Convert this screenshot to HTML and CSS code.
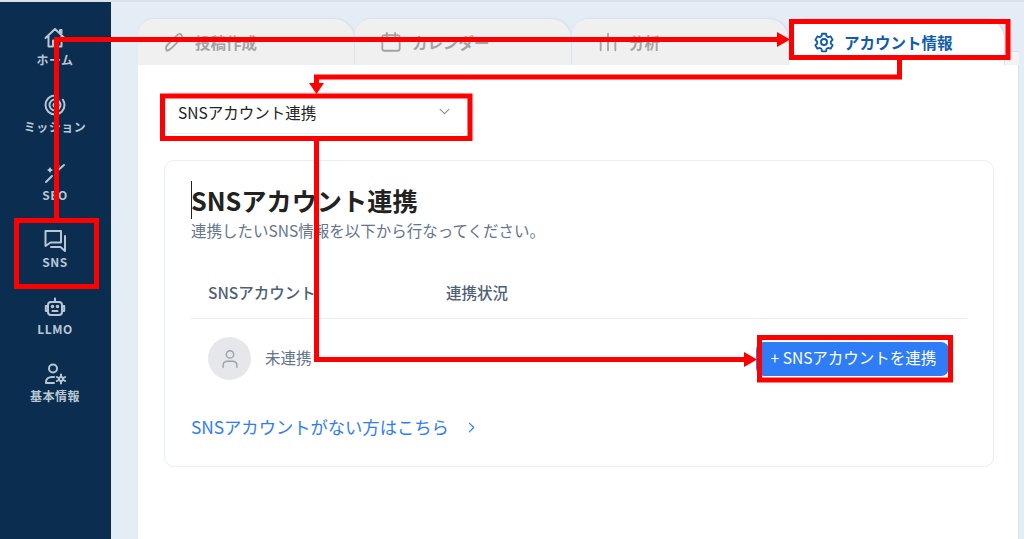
FILE: index.html
```html
<!DOCTYPE html>
<html lang="ja">
<head>
  <meta charset="UTF-8">
  <meta name="viewport" content="width=device-width, initial-scale=1.0">
  <title>SNSアカウント連携</title>
  <link rel="stylesheet" href="styles.css">
</head>
<body>
  <div class="app">
    <nav class="sidebar">
      <a class="nav-item">
        <svg viewBox="0 0 24 24"><path d="M2.500 12 12 3l9.500 9M5.500 10v10.500h4.500v-6h4v6h4.500V10M17 6V4h1.500v3.500"/></svg>
        <span>ホーム</span>
      </a>
      <a class="nav-item">
        <svg viewBox="0 0 24 24"><path d="M12 2.500a9.500 9.500 0 1 0 9.500 9.500c0-2-.6-3.800-1.600-5.300"/><path d="M12 6.500a5.500 5.500 0 1 0 5.500 5.500c0-1.500-.5-2.700-1.400-3.700"/><path d="M12 10.500a1.500 1.500 0 1 0 1.500 1.500V3"/></svg>
        <span>ミッション</span>
      </a>
      <a class="nav-item">
        <svg viewBox="0 0 24 24"><path d="m3 21 6-6M13 11l8-7"/><path d="M7 7.500v3M5.500 9h3"/><circle cx="15" cy="5" r=".5"/></svg>
        <span>SEO</span>
      </a>
      <a class="nav-item">
        <svg viewBox="0 0 24 24"><path d="M2.500 3h15.500v11.500H7.500l-5 3.500z"/><path d="M22 8v15l-4.500-4H8"/></svg>
        <span>SNS</span>
      </a>
      <a class="nav-item">
        <svg viewBox="0 0 24 24"><rect x="5" y="7" width="14" height="13" rx="3"/><path d="M12 7V3.500M5 11H2.800v5H5M19 11h2.200v5H19M9.500 16h5"/><circle cx="9.500" cy="11.500" r=".8"/><circle cx="14.500" cy="11.500" r=".8"/></svg>
        <span>LLMO</span>
      </a>
      <a class="nav-item">
        <svg viewBox="0 0 24 24"><circle cx="10" cy="6.500" r="4"/><path d="M3 21v-1c0-3 2.500-5 6-5h2M3 21h8"/><circle cx="18" cy="17" r="2"/><path d="M18 12.500v2M18 19.500v2M13.800 15l1.800 1M20.400 18l1.800 1M13.800 19l1.800-1M20.400 16l1.800-1"/></svg>
        <span>基本情報</span>
      </a>
    </nav>

    <main class="main">
      <div class="tabs">
        <div class="tab">
          <svg viewBox="0 0 24 24"><path d="M4 21.500c-1.200-2.500-.5-5 1-6.500L15.500 4.500c1.500-1.500 3.500-1.500 4.500-.500s1 3-.5 4.500L9.500 18.500c-1.500 1.500-3.500 3-5.500 3z"/></svg>
          投稿作成
        </div>
        <div class="tab">
          <svg viewBox="0 0 24 24"><rect x="2.500" y="4.500" width="19" height="17" rx="2.500"/><path d="M2.500 9.500h19M7.500 2v4.500M16.500 2v4.500"/></svg>
          カレンダー
        </div>
        <div class="tab">
          <svg viewBox="0 0 24 24"><path d="M4 21v-9M12 21V3M20 21v-9"/></svg>
          分析
        </div>
        <div class="tab active">
          <svg viewBox="0 0 24 24"><path d="M9.800 3h4.400l.6 2.700 1.700 1 2.700-.8 2.200 3.800-2 1.900v2l2 1.900-2.200 3.800-2.700-.8-1.700 1-.6 2.700H9.800l-.6-2.700-1.700-1-2.700.8-2.200-3.800 2-1.900v-2l-2-1.900 2.200-3.800 2.700.8 1.700-1z"/><circle cx="12" cy="12" r="3.300"/></svg>
          アカウント情報
        </div>
        <div class="tab-rest"></div>
      </div>

      <div class="panel">
        <div class="select">
          <span>SNSアカウント連携</span>
          <svg viewBox="0 0 12 8"><path d="m1 1.500 5 5 5-5"/></svg>
        </div>

        <section class="card">
          <h2 class="card-title">SNSアカウント連携</h2>
          <p class="card-sub">連携したいSNS情報を以下から行なってください。</p>

          <div class="table-head">
            <span class="col-account">SNSアカウント</span>
            <span>連携状況</span>
          </div>
          <div class="table-row">
            <div class="avatar">
              <svg viewBox="0 0 24 24"><circle cx="12" cy="7" r="4"/><path d="M4.500 21v-2c0-3 2-4.500 5-4.500h5c3 0 5 1.500 5 4.500v2"/></svg>
            </div>
            <span class="status">未連携</span>
            <button class="btn" type="button">+ SNSアカウントを連携</button>
          </div>

          <a class="link">
            SNSアカウントがない方はこちら
            <svg viewBox="0 0 8 12"><path d="m1.500 1 5 5-5 5"/></svg>
          </a>
        </section>
      </div>
    </main>
  </div>

  <!-- 説明用の赤い枠と矢印 -->
  <svg class="marks" viewBox="0 0 1024 539">
    <g class="mark-line">
      <rect x="16.500" y="220.500" width="80" height="66"/>
      <rect x="791.500" y="21.500" width="216.500" height="36"/>
      <rect x="162.500" y="96" width="307.500" height="42.500"/>
      <rect x="759.500" y="337.500" width="191" height="42.500"/>
      <path class="thin" d="M56.500 218V39.500H778"/>
      <path class="thin" d="M899.500 60V77H316.500V84"/>
      <path class="thin" d="M316.500 141V359.500H745"/>
    </g>
    <path class="mark-head" d="m777 32 13 7.500-13 7.500z"/>
    <path class="mark-head" d="m309 83 7.500 11 7.500-11z"/>
    <path class="mark-head" d="m744 352 13 7.500-13 7.500z"/>
  </svg>
</body>
</html>
```

FILE: styles.css
```css
* {
  box-sizing: border-box;
}
html, body {
  height: 100%;
}
body {
  margin: 0;
  font-family: "Noto Sans CJK JP", "Noto Sans", sans-serif;
  background-color: #e4edf6;
  color: #222;
  overflow: hidden;
}
svg {
  fill: none;
  stroke: currentColor;
  stroke-width: 2;
  stroke-linecap: round;
  stroke-linejoin: round;
}
.app {
  display: flex;
  height: 100%;
  border-top: 2px solid #dde2e8;
}

/* sidebar */
.sidebar {
  width: 111px;
  flex-shrink: 0;
  background-color: #0a2d50;
  color: #b9c6d3;
  display: flex;
  flex-direction: column;
  align-items: center;
  padding: 24px 1px 0 0;
  gap: 19px;
}
.nav-item {
  display: flex;
  flex-direction: column;
  align-items: center;
  height: 48.300px;
  width: 100px;
  font-size: 12px;
  font-weight: 700;
  line-height: 18px;
  letter-spacing: 0.5px;
}
.nav-item svg {
  width: 24px;
  height: 24px;
  margin-bottom: 1px;
}

/* tabs */
.main {
  flex: 1;
  padding: 17px 5px 0 27px;
  display: flex;
  flex-direction: column;
  min-width: 0;
}
.tabs {
  display: flex;
  height: 46px;
  gap: 1px;
}
.tab {
  width: 216px;
  background-color: #f0f0f0;
  border-radius: 16px 20px 0 0;
  box-shadow: 1px -1px 2px #d3e0ee;
  color: #a3a3a3;
  font-size: 15.500px;
  font-weight: 700;
  display: flex;
  align-items: center;
  gap: 10px;
  padding-left: 25px;
}
.tab svg {
  width: 22px;
  height: 22px;
  flex-shrink: 0;
}
.tab.active {
  background-color: #fff;
  color: #0f5cad;
  width: 215px;
  padding-left: 24px;
  gap: 9px;
}
.tab-rest {
  flex: 1;
  height: 14px;
  align-self: flex-end;
  background-color: #f3f3f3;
  border-top: 1px solid #dde2e8;
}

/* panel */
.panel {
  flex: 1;
  background-color: #fff;
  border-right: 1px solid #dde2e8;
  padding: 27px 24px 0 26px;
}
.select {
  width: 303px;
  height: 42px;
  margin-left: 1px;
  padding: 0 16px 2px 12px;
  border: 1px solid #e9eef5;
  border-radius: 8px;
  display: flex;
  align-items: center;
  justify-content: space-between;
  font-size: 15.500px;
}
.select svg {
  width: 11px;
  height: 7px;
  color: #8a8f96;
  stroke-width: 1.300;
  margin-right: 1px;
  margin-top: -1px;
}

/* card */
.card {
  margin-top: 26px;
  height: 307px;
  border: 1px solid #e9eef6;
  border-radius: 10px;
  padding: 20px 26px 0;
}
.card-title {
  position: relative;
  margin: 0;
  font-size: 25.200px;
  line-height: 38px;
  font-weight: 700;
  color: #222;
}
.card-title::before {
  content: "";
  position: absolute;
  left: 0;
  top: 0;
  width: 1px;
  height: 38px;
  background-color: #222;
}
.card-sub {
  margin: 1px 0 0;
  font-size: 15.500px;
  line-height: 20px;
  color: #64748b;
}
.table-head {
  display: flex;
  margin-top: 33px;
  padding: 0 17px 8px;
  height: 46px;
  align-items: center;
  border-bottom: 1px solid #e9eef6;
  font-size: 15.500px;
  font-weight: 500;
  color: #4f5f75;
}
.col-account {
  width: 238px;
  flex-shrink: 0;
}
.table-row {
  display: flex;
  align-items: center;
  padding: 18px 18px 0 17px;
}
.avatar {
  width: 43px;
  height: 43px;
  border-radius: 50%;
  background-color: #e5e7eb;
  color: #9ca3af;
  display: flex;
  align-items: center;
  justify-content: center;
}
.avatar svg {
  width: 22px;
  height: 22px;
  stroke-width: 1.600;
}
.status {
  margin: 0 0 3px 14px;
  font-size: 15.500px;
  color: #64748b;
  flex: 1;
}
.btn {
  width: 193px;
  height: 34px;
  border: none;
  border-radius: 8px;
  background-color: #2f7df6;
  color: #fff;
  font-family: inherit;
  font-size: 15.500px;
  font-weight: 400;
  padding: 0 0 3px 2px;
  white-space: nowrap;
}
.link {
  display: flex;
  align-items: center;
  gap: 19px;
  margin-top: 35px;
  font-size: 17.300px;
  line-height: 24px;
  color: #2f7df6;
}
.link svg {
  width: 7px;
  height: 11px;
  stroke-width: 1.300;
}

/* red annotations */
.marks {
  position: absolute;
  left: 0;
  top: 0;
  width: 1024px;
  height: 539px;
  stroke: none;
}
.mark-line {
  fill: none;
  stroke: #ff0000;
  stroke-width: 5;
  stroke-linecap: butt;
  stroke-linejoin: miter;
}
.mark-head {
  fill: #ff0000;
  stroke: none;
}
```
